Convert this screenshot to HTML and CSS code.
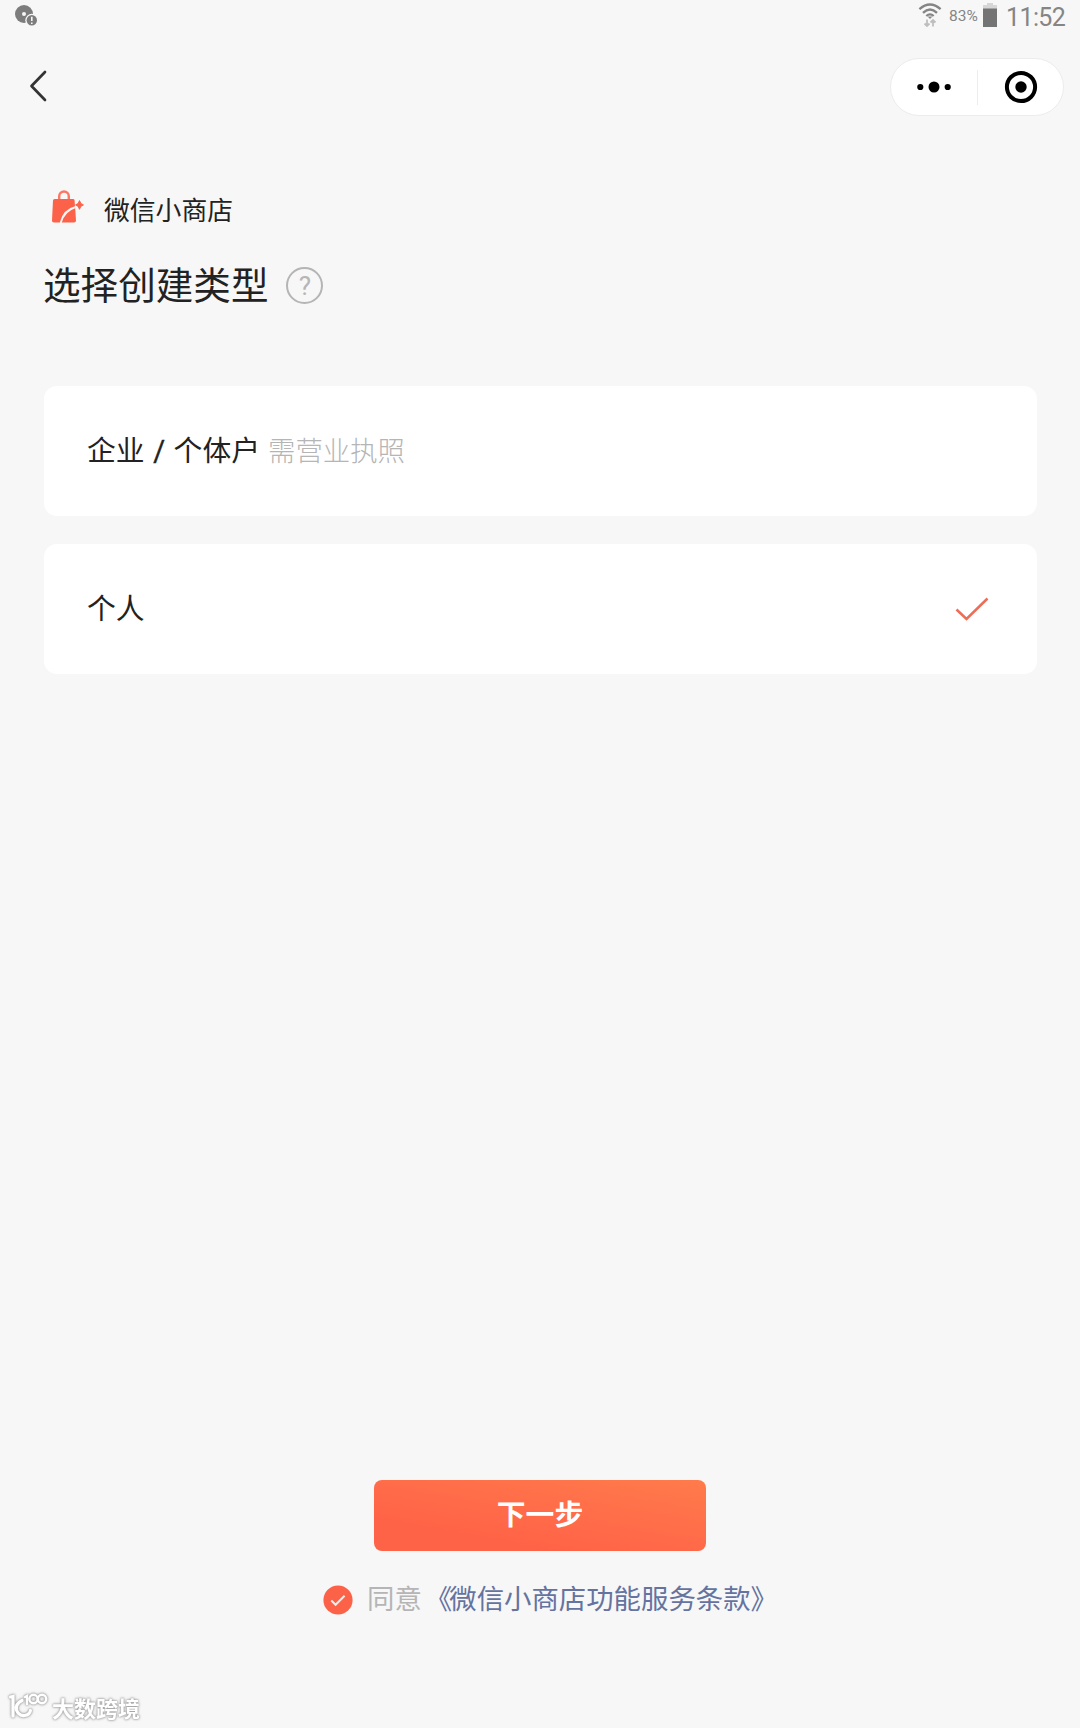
FILE: index.html
```html
<!DOCTYPE html>
<html lang="zh-CN">
<head>
<meta charset="utf-8">
<title>选择创建类型</title>
<link rel="stylesheet" href="styles.css">
</head>
<body>
<div class="page">
  <header class="status">
    <svg class="status-notice" width="26" height="24" viewBox="0 0 26 24">
      <circle cx="10" cy="9" r="9" fill="#7d7d7d"/>
      <circle cx="10" cy="9" r="2" fill="#f7f7f7"/>
      <circle cx="17.8" cy="15.3" r="6.5" fill="#f7f7f7"/>
      <circle cx="17.8" cy="15.3" r="5.2" fill="#7d7d7d"/>
      <path d="M17.8 11.8v4.3M17.8 17.4v1.6" stroke="#f7f7f7" stroke-width="1.6"/>
    </svg>
    <svg class="wifi" width="24" height="25" viewBox="0 0 24 25">
      <g fill="none" stroke="#858585" stroke-width="2.3">
        <path d="M1.4 6.2Q12-3.2 22.6 6.2"/>
        <path d="M5 9.8Q12 3.2 19 9.8"/>
        <path d="M8.3 13Q12 9.8 15.7 13"/>
      </g>
      <path d="M12 16l-2.4-2.4h4.8z" fill="#858585"/>
      <g fill="none" stroke="#bebebe" stroke-width="1.8"><path d="M9 16.5v6.5M6.5 20.5L9 23l2.5-2.5M15 23.5v-6.5M12.5 19.5L15 17l2.5 2.5"/></g>
    </svg>
    <span class="battery-level">83%</span>
    <svg class="battery" width="14" height="24" viewBox="0 0 14 24">
      <path d="M4 0h6v2h4v4H0V2h4z" fill="#d6d6d6"/>
      <path d="M0 5.5h14V24H0z" fill="#747474"/>
    </svg>
    <span class="clock">11:52</span>
  </header>

  <nav class="nav">
    <svg class="back" width="18" height="32" viewBox="0 0 18 32"><path d="M16 2L2.5 16 16 30" fill="none" stroke="#333" stroke-width="2.7" stroke-linecap="round" stroke-linejoin="round"/></svg>
    <div class="capsule">
      <div class="capsule-half">
        <svg width="36" height="12" viewBox="0 0 36 12"><circle cx="4.3" cy="6" r="3.1"/><circle cx="18" cy="6" r="5.5"/><circle cx="31.7" cy="6" r="3.1"/></svg>
      </div>
      <div class="capsule-half">
        <svg width="34" height="34" viewBox="0 0 34 34"><circle cx="17" cy="17" r="14.1" fill="none" stroke="#000" stroke-width="4"/><circle cx="17" cy="17" r="5.7"/></svg>
      </div>
    </div>
  </nav>

  <main class="content">
    <div class="brand">
      <svg width="34" height="34" viewBox="0 0 34 34">
        <path d="M8.2 11V6.3a4.8 4.8 0 0 1 9.6 0V11" fill="none" stroke="#fc7763" stroke-width="2.4"/>
        <path d="M3.5 9H22a1.6 1.6 0 0 1 1.6 1.4l.4 5.8Q12 19 8.8 32.5H3a2 2 0 0 1-2-2.2L2 10.4A1.6 1.6 0 0 1 3.5 9z" fill="#fc624a"/>
        <path d="M24.2 18.2l.8 12.2a2 2 0 0 1-2 2.1H10.8Q14 21.5 24.2 18.2z" fill="#fc624a"/>
        <path d="M28.5 10.6q.8 3.6 3.9 4.3-3.1.7-3.9 4.4-.8-3.7-3.9-4.4 3.1-.7 3.9-4.3z" fill="#fc624a" stroke="#fc624a"/>
      </svg>
      <span>微信小商店</span>
    </div>
    <div class="heading">
      <h1>选择创建类型</h1>
      <span class="help">?</span>
    </div>
    <div class="options">
      <div class="option">
        <span>企业<span class="slash">/</span>个体户</span>
        <span class="hint">需营业执照</span>
      </div>
      <div class="option">
        <span>个人</span>
        <svg class="tick" width="34" height="24" viewBox="0 0 34 24"><path d="M1.5 12.5L11.5 22 32.5 1.5" fill="none" stroke="#ec6d58" stroke-width="2.5"/></svg>
      </div>
    </div>
  </main>

  <footer class="footer">
    <button class="next">下一步</button>
    <div class="terms">
      <svg width="30" height="30" viewBox="0 0 30 30"><circle cx="15" cy="15" r="14.6" fill="#fc6248"/><path d="M8.3 15.5l4.3 4.3 9-9" fill="none" stroke="#ffe9e4" stroke-width="2"/></svg>
      <span class="agree">同意</span><a class="link"><span class="open-mark">《</span>微信小商店功能服务条款》</a>
    </div>
  </footer>

  <div class="watermark">
    <svg width="40" height="32" viewBox="0 0 40 32">
      <g fill="none" stroke="#fff" stroke-linecap="round">
        <path stroke-width="3.2" d="M2.5 6L5 5.5V25M14 9.5Q7 13 8.5 19q2 6 8 5.500 5-.5 6-5"/>
        <path stroke-width="2.4" d="M17 6l2-1v8"/>
        <circle stroke-width="2.4" cx="25.5" cy="8" r="4.2"/>
        <circle stroke-width="2.4" cx="34" cy="8" r="4.2"/>
      </g>
    </svg>
    <span>大数跨境</span>
  </div>
</div>
</body>
</html>
```
FILE: styles.css
```css
* { box-sizing: border-box; }

body {
  margin: 0;
  background: #f7f7f7;
  color: #222;
  font-family: "Noto Sans CJK SC", sans-serif;
}

svg { display: block; flex: none; }

.page {
  position: relative;
  width: 1080px;
  height: 1728px;
  display: flex;
  flex-direction: column;
  overflow: hidden;
  background: #f7f7f7;
}

.status {
  height: 32px;
  padding: 3px 14px 0 14px;
  display: flex;
  align-items: flex-start;
  color: #858585;
  font-family: Roboto, sans-serif;
}
.status-notice { margin: 2px auto 0 0; }
.wifi { margin-right: 7px; }
.battery-level { width: 34px; font-size: 15.5px; line-height: 27px; }
.battery { width: 14px; }
.clock {
  width: 60px;
  margin-left: 9px;
  font-size: 25px;
  line-height: 30px;
  letter-spacing: -0.6px;
  white-space: nowrap;
}

.nav {
  height: 84px;
  padding: 26px 16px 0 29px;
  display: flex;
  justify-content: space-between;
}
.back { margin-top: 12px; }
.capsule {
  width: 174px;
  height: 58px;
  display: flex;
  border: 1px solid #ececec;
  border-radius: 29px;
  background: #fff;
}
.capsule-half { width: 50%; display: flex; align-items: center; justify-content: center; }
.capsule-half + .capsule-half {
  background: linear-gradient(#ededed, #ededed) 0 50% / 1px 35px no-repeat;
  padding-left: 2px;
}

.content { padding: 0 43px 0 44px; }

.brand {
  height: 60px;
  margin-top: 62px;
  padding-left: 7px;
  display: flex;
  align-items: center;
  gap: 19px;
  font-size: 25.8px;
}
.brand svg { margin-top: -3px; }

.heading { height: 60px; margin-top: 15px; display: flex; align-items: center; gap: 18px; }
.heading h1 { margin: 0 0 0 -1px; font-size: 37.6px; font-weight: 400; line-height: 60px; }
.help {
  width: 37px;
  height: 37px;
  margin-top: 4px;
  border: 2px solid #b5b5b5;
  border-radius: 50%;
  color: #b5b5b5;
  font: 26px/35px Roboto, sans-serif;
  text-align: center;
}

.options { display: grid; gap: 28px; margin-top: 73px; }
.option {
  height: 130px;
  padding: 0 48px 5px 43px;
  display: flex;
  align-items: center;
  gap: 8px;
  border-radius: 13px;
  background: #fff;
  font-size: 28.8px;
}
.slash { display: inline-block; width: 29px; text-align: center; font-family: Roboto, sans-serif; -webkit-text-stroke: 0.4px #222; }
.hint { font-size: 27.4px; color: #b5b5b5; font-weight: 300; }
.tick { margin: 5px 0 0 auto; }

.footer { margin-top: auto; height: 248px; display: flex; flex-direction: column; align-items: center; }
.next {
  width: 332px;
  height: 71px;
  padding: 0 0 5px;
  border: 0;
  border-radius: 8px;
  background: linear-gradient(10deg, #ff6347 25%, #ff7b4c 100%);
  color: #fff;
  font: 700 28.8px/1 "Noto Sans CJK SC", sans-serif;
}
.terms {
  height: 44px;
  margin-top: 24px;
  padding-left: 21px;
  display: flex;
  align-items: center;
  font-size: 27.4px;
  white-space: nowrap;
}
.terms svg { margin: 6px 14px 0 0; }
.agree { color: #b5b5b5; }
.link { color: #6473a0; }
.open-mark { margin: 0 -3px 0 3px; }

.watermark {
  position: absolute;
  left: 8px;
  bottom: 4px;
  display: flex;
  align-items: center;
  gap: 4px;
  height: 34px;
  color: #fff;
  font-size: 22px;
  font-weight: 700;
  filter: drop-shadow(0 0 1px #999) drop-shadow(0 0 1px #bbb);
}
```
